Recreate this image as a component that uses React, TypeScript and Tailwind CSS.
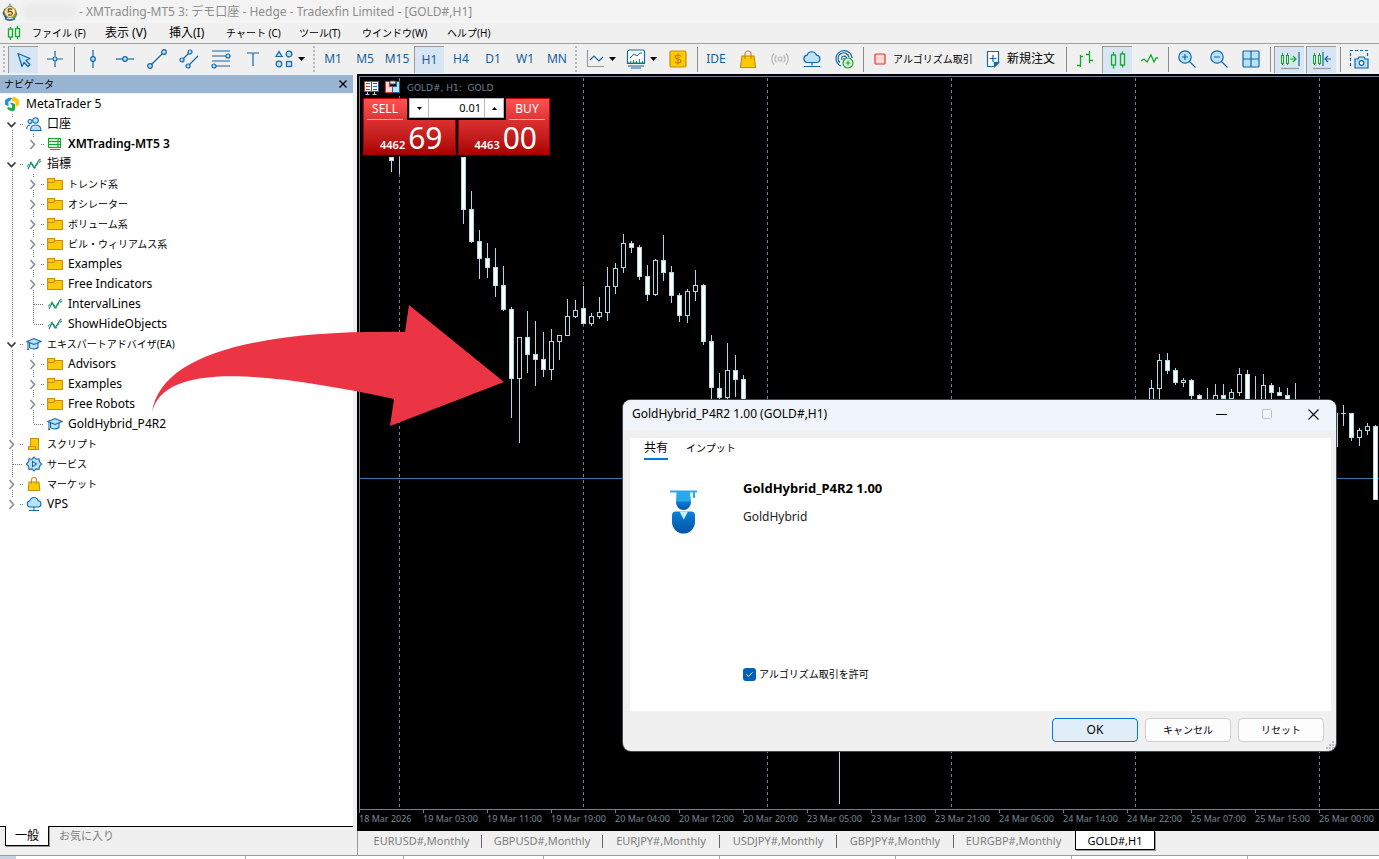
import React from "react";

type Candle = [x: number, high: number, top: number, bottom: number, low: number, filled: boolean];

const BLUE = "#1567a5";
const PALE = "#b9e2fb";

const candles: Candle[] = [
  [391, 157, 157, 161, 172, true],
  [463, 157, 157, 210, 224, true],
  [471, 191, 209, 242, 243, true],
  [479, 230, 241, 259, 279, true],
  [487, 243, 258, 268, 278, true],
  [495, 248, 267, 286, 297, true],
  [503, 266, 285, 310, 311, true],
  [511, 307, 309, 379, 418, true],
  [519, 337, 337, 379, 443, false],
  [527, 311, 337, 355, 373, true],
  [535, 321, 354, 360, 386, true],
  [543, 332, 359, 370, 377, true],
  [551, 329, 341, 370, 380, false],
  [559, 335, 335, 342, 360, false],
  [567, 299, 316, 336, 336, false],
  [575, 300, 310, 317, 318, false],
  [583, 286, 308, 324, 324, true],
  [591, 313, 316, 324, 326, false],
  [599, 297, 312, 317, 319, false],
  [607, 267, 286, 313, 321, false],
  [615, 263, 268, 287, 294, false],
  [623, 234, 243, 268, 273, false],
  [631, 241, 243, 248, 253, true],
  [639, 245, 247, 277, 280, true],
  [647, 265, 276, 295, 301, true],
  [655, 259, 260, 295, 296, false],
  [663, 235, 260, 273, 281, true],
  [671, 266, 272, 296, 303, true],
  [679, 293, 295, 316, 322, true],
  [687, 289, 291, 316, 323, false],
  [695, 270, 285, 292, 301, false],
  [703, 284, 285, 342, 345, true],
  [711, 335, 341, 388, 402, true],
  [719, 373, 388, 398, 402, true],
  [727, 343, 370, 398, 399, false],
  [735, 355, 370, 380, 397, true],
  [743, 375, 379, 404, 404, true],
  [1151, 380, 388, 404, 404, false],
  [1159, 354, 360, 389, 399, false],
  [1167, 353, 360, 371, 374, true],
  [1175, 368, 370, 383, 385, true],
  [1183, 378, 380, 383, 387, false],
  [1191, 379, 380, 396, 404, true],
  [1199, 394, 395, 404, 404, true],
  [1215, 384, 395, 404, 404, false],
  [1223, 384, 395, 399, 404, true],
  [1231, 389, 392, 399, 404, false],
  [1239, 368, 374, 393, 396, false],
  [1247, 370, 374, 404, 404, true],
  [1263, 374, 385, 404, 404, false],
  [1271, 383, 385, 393, 404, true],
  [1279, 387, 392, 396, 396, true],
  [1287, 388, 395, 404, 404, true],
  [1335, 413, 413, 447, 447, false],
  [1343, 405, 413, 414, 426, true],
  [1351, 413, 413, 438, 441, true],
  [1359, 428, 430, 438, 446, false],
  [1367, 423, 426, 431, 435, false],
  [1375, 425, 426, 500, 500, true],
];

const wicks: [number, number, number][] = [
  [399, 157, 174],
  [839, 740, 804],
  [1143, 399, 404],
  [1207, 388, 404],
  [1255, 376, 404],
  [1295, 383, 404],
];

const timeLabels = [
  "18 Mar 2026", "19 Mar 03:00", "19 Mar 11:00", "19 Mar 19:00", "20 Mar 04:00", "20 Mar 12:00",
  "20 Mar 20:00", "23 Mar 05:00", "23 Mar 13:00", "23 Mar 21:00", "24 Mar 06:00", "24 Mar 14:00",
  "24 Mar 22:00", "25 Mar 07:00", "25 Mar 15:00", "26 Mar 00:00",
];

/* ---------- icons ---------- */

function Ico({ children, w = 20, h = 20 }: { children: React.ReactNode; w?: number; h?: number }) {
  return (
    <svg width={w} height={h} viewBox={`0 0 ${w} ${h}`} fill="none" stroke={BLUE} strokeWidth={w < 20 ? 1.05 : 1.2} className="block shrink-0" aria-hidden="true">
      {children}
    </svg>
  );
}

const Dot = ({ x, y, r = 2 }: { x: number; y: number; r?: number }) => <circle cx={x} cy={y} r={r} fill={PALE} />;

const Caret = () => (
  <svg width="7" height="4" viewBox="0 0 7 4" className="block shrink-0" aria-hidden="true"><path d="M0 0h7L3.500 4z" fill="#000" /></svg>
);

const IconPointer = () => <Ico><path d="M4 3.500 L16 8.500 L12 10.500 L16 14.500 L14 16.500 L10 12.500 L8 16.500 Z" fill={PALE} strokeLinejoin="round" /></Ico>;
const IconCross = () => <Ico><path d="M10 2v5.500M10 12.500V18M2 10h5.500M12.500 10H18" /><Dot x={10} y={10} /></Ico>;
const IconVLine = () => <Ico><path d="M10 1v18" /><Dot x={10} y={10} r={2.3} /></Ico>;
const IconHLine = () => <Ico><path d="M1 10h18" /><Dot x={10} y={10} r={2.3} /></Ico>;
const IconTrend = () => <Ico><path d="M3 17 17 3" /><Dot x={3} y={17} r={2.3} /><Dot x={17} y={3} r={2.3} /></Ico>;
const IconChannel = () => <Ico><path d="M3 11 11 3M9 17 19 7" /><Dot x={3} y={11} /><Dot x={11} y={3} /><Dot x={9} y={17} /></Ico>;
const IconFib = () => <Ico><path d="M1 2h18M1 7h14M1 12h18M5 17h14" /><Dot x={17} y={7} /><Dot x={3} y={17} /></Ico>;
const IconText = () => <Ico><path d="M4 4h12M10 4v13" /></Ico>;
const IconShapes = () => (
  <Ico><path d="M5 2.500 8 7.500H2z" fill={PALE} /><circle cx="15" cy="5" r="2.800" fill={PALE} /><circle cx="5" cy="15" r="2.800" fill={PALE} /><rect x="12.500" y="12.500" width="5" height="5" fill={PALE} /></Ico>
);
const IconLineChart = () => <Ico><path d="M1.500 1v16.500H18" stroke="#999" /><path d="M4 11l4-4 5 5 4-4" /></Ico>;
const IconIndicators = () => (
  <Ico><path d="M1.500 14V3a2 2 0 0 1 2-2h13a2 2 0 0 1 2 2v11z" fill="#fff" /><path d="M4 9l4-4 3 2 3-3 2 0" strokeWidth="1" /><path d="M4.500 14v-2M7.500 14v-3M10.500 14v-2M13.500 14v-4M16.500 14v-2" stroke="#12a92c" strokeWidth="1" /><path d="M1 14.500h18M2 17h16M5 19h10" /></Ico>
);
const IconDollar = () => (
  <Ico><rect x="2" y="2" width="16" height="16" rx="1.500" fill="#fcca02" stroke="#c98c0b" /><path d="M13 7.500C12.500 6.500 11.500 6 10 6c-1.700 0-2.800.8-2.800 2s1 1.700 2.800 2 2.900.9 2.900 2.100S11.700 14 10 14s-2.700-.6-3-1.700M10 4.500v11" stroke="#c07f00" /></Ico>
);
const IconBag = () => <Ico><path d="M4 7h12l1.500 11.500h-15z" fill="#fcca02" stroke="#c98c0b" /><path d="M7 10V5a3 3 0 0 1 6 0v5" stroke="#c98c0b" /></Ico>;
const IconSignal = () => (
  <Ico><g stroke="#b4b4b4"><circle cx="10" cy="10" r="2" /><path d="M6.500 6.500a5 5 0 0 0 0 7M13.500 6.500a5 5 0 0 1 0 7M4 4.500a8 8 0 0 0 0 11M16 4.500a8 8 0 0 1 0 11" /></g></Ico>
);
const IconCloud = () => <Ico><path d="M5 13.500a3.700 3.700 0 0 1 0-7.300 5 5 0 0 1 9.500 0 3.700 3.700 0 0 1 .5 7.300z" fill={PALE} /><path d="M10 13.500v3M2 17.500h16M8 17.500h4" /></Ico>;
const IconCommunity = () => (
  <Ico><path d="M7 17A8 8 0 1 1 18 9M6 13.500a5.500 5.500 0 1 1 9-5M8 11a2.500 2.500 0 1 1 4.500-2M10 9v3" /><circle cx="14" cy="14" r="5" fill="#e6f9e8" stroke="#12a92c" /><path d="M14 11.500v5M11.500 14h5" stroke="#12a92c" /></Ico>
);
const IconStop = () => <Ico><rect x="5" y="5" width="10" height="10" rx="1" fill="#ffd9d6" stroke="#e0342c" /></Ico>;
const IconNewOrder = () => <Ico><path d="M4.500 2.500h11v11l-4 4h-7zM15.500 13.500h-4v4" fill="#fff" strokeLinejoin="round" /><path d="m15.500 13.500-4 4v-4z" fill={BLUE} /><path d="M10 6v7M6.500 9.500h7" /></Ico>;
const IconBars = () => <Ico><g stroke="#12a92c" strokeWidth="1.300"><path d="M5.500 6v12M2 16.500h3.500M5.500 7.500H8M14.500 2v12M11 5.500h3.500M14.500 11.500H18" /></g></Ico>;
const IconCandles = () => <Ico><g stroke="#12a92c" strokeWidth="1.300"><path d="M5.500 2V5m0 10v3.500M14.500 1.500V4m0 11v2.500" /><rect x="3.500" y="5" width="4" height="10" /><rect x="12.500" y="4" width="4" height="11" /></g></Ico>;
const IconMenuCandles = () => <Ico w={14} h={16}><g stroke="#12a92c" strokeWidth="1.300"><path d="M3.500 2v2m0 8v3M10.500 1v2.500m0 8v2.500" /><rect x="1.500" y="4" width="4" height="8" /><rect x="8.500" y="3.500" width="4" height="8" /></g></Ico>;
const IconZigzag = () => <Ico><path d="m2 12 3-2 3 3 4-7 3 7 2-4 2 0" stroke="#12a92c" strokeWidth="1.300" /></Ico>;
const IconZoom = ({ plus }: { plus?: boolean }) => <Ico><circle cx="8" cy="8" r="6.200" fill={PALE} /><path d={plus ? "M12.500 12.500 18.500 18.500M5 8h6M8 5v6" : "M12.500 12.500 18.500 18.500M5 8h6"} /></Ico>;
const IconGrid = () => <Ico><rect x="2" y="2" width="16" height="16" rx="1" fill={PALE} /><path d="M10 2v16M2 10h16" /></Ico>;
const IconScroll = ({ shift }: { shift?: boolean }) => (
  <Ico>
    <g stroke="#12a92c" strokeWidth="1"><path d="M2.500 3v12M7.500 3v12" /><rect x="1.500" y="5.500" width="2" height="8" fill="#dff3e0" /><rect x="6.500" y="5.500" width="2" height="8" fill="#dff3e0" /></g>
    {shift ? <path d="M11 2v14M19 9h-6m3-3-3 3 3 3" /> : <><path d="M10 9h6m-3-3 3 3-3 3" stroke="#12a92c" /><path d="M19 2v14" /></>}
    <path d="M1 18.500h18" stroke="#999" />
  </Ico>
);
const IconCamera = () => <Ico><path d="M1.500 17V1.500h17V7" strokeDasharray="3 2" /><path d="M6 10h3l1-2h5l1 2h3v9H6z" fill={PALE} /><circle cx="12.500" cy="14" r="2.300" fill="#fff" /></Ico>;

const IconUsers = () => (
  <Ico w={16} h={16}><circle cx="9.500" cy="4.500" r="2.800" fill={PALE} /><path d="M4.500 14.500c0-4 2-5.500 5-5.500s5.500 1.500 5.500 5.500z" fill={PALE} /><circle cx="4" cy="5.500" r="2" fill={PALE} /><path d="M.7 13c0-3 1.300-4 3.800-4" /></Ico>
);
const IconServer = () => <Ico w={16} h={16}><g stroke="#12a92c"><rect x="1.500" y="2.500" width="12" height="9" fill="#d6f6d8" /><path d="M2 5.500h12M2 8.500h12M3 13.500h10M11 3v8" /></g></Ico>;
const IconIndicator = () => <Ico w={16} h={16}><path d="m2 13 3-6 3 5 5-8 1.500-1" /><path d="M1 10.500 5 6l4 6 3-5 3-2" stroke="#12a92c" strokeDasharray="3 1" /></Ico>;
const IconFolder = () => <Ico w={16} h={16}><path d="M.6 2.500h7v2h7.800v9H.6z" fill="#fcca02" stroke="#c98c0b" /><path d="M1 6.500h5.500l1.500-2" stroke="#c98c0b" /></Ico>;
const IconCap = () => <Ico w={16} h={16}><path d="M3.500 6.500v5c2 2 6 2 8.500 0v-5" fill={PALE} /><path d="M1 5.500 8 2.500l7 3-7 3z" fill={PALE} /><path d="M2 6v7.500M1 13.500l2 0" /></Ico>;
const IconScript = () => <Ico w={16} h={16}><path d="M4.500 2.500h8v11h-10v-3h2z" fill="#fcca02" stroke="#c98c0b" /><path d="M2.500 10.500h7v3" stroke="#c98c0b" /></Ico>;
const IconService = () => <Ico w={16} h={16}><path d="m8 1 2 2.200 3-.4.5 2.900L15.500 8l-2 2.300-.5 3-3-.4L8 15l-2-2.100-3 .4-.5-3L.5 8l2-2.300.5-2.900 3 .4z" fill={PALE} /><path d="M6.500 5.500v5L10.500 8z" fill="#fff" /></Ico>;
const IconMarket = () => <Ico w={16} h={16}><path d="M3 6h10l.8 8.500H2.200z" fill="#fcca02" stroke="#c98c0b" /><path d="M5.500 8V4a2.500 2.500 0 0 1 5 0v4" stroke="#c98c0b" /></Ico>;
const IconVps = () => <Ico w={16} h={16}><path d="M4 11a3.200 3.200 0 0 1-.2-6.300 4.300 4.300 0 0 1 8.300 0A3.200 3.200 0 0 1 12.500 11z" fill={PALE} /><path d="M8 11v3M3 14.500h10" /></Ico>;
const IconRoot = () => (
  <svg width="16" height="16" viewBox="0 0 16 16" className="block shrink-0" aria-hidden="true">
    <path d="M1 4 5 1.500 8 2 6.500 4.500 4.500 5.500v5L1 8.500z" fill="#1b93e8" />
    <path d="M8.500.8 11 1l4 3v5l-3.500 2V6.500L7.500 4z" fill="#fcc803" />
    <path d="M3.500 11v2.500L8.500 15.500l2.500-1.500V8L7.500 6.500l-1.500 1L8 9v3z" fill="#1eaa4d" />
  </svg>
);

/* ---------- title and menu ---------- */

function TitleBar() {
  return (
    <header className="flex h-[23px] shrink-0 items-center bg-[#f3f3f3] pl-[2px]">
      <svg width="16" height="18" viewBox="0 0 16 18" className="block shrink-0" aria-hidden="true">
        <path d="M8 0 11 5H5z" fill="#6db3d8" /><path d="M3 5 .5 10l3 6 4-3z" fill="#1d5e92" /><path d="m13 5 2.500 6-3 5.500L8 13z" fill="#56a044" />
        <circle cx="8" cy="9" r="5.500" fill="#f7e3ac" stroke="#b48a2c" />
        <path d="M10.300 6H6.600L6.300 8.800c2-.8 4-.2 4 1.500 0 2-2.500 2.300-4.300 1.300" fill="none" stroke="#7c5b17" strokeWidth="1.400" />
        <path d="M3 15.500q5 3 10 0" stroke="#33749c" fill="none" strokeWidth="2" />
      </svg>
      <span className="ml-[4px] h-[17px] w-[56px] shrink-0 rounded-full bg-[#ebebeb] blur-[2px]" />
      <h1 className="ml-px truncate text-[12px] text-[#8d8d8d]">- XMTrading-MT5 3: デモ口座 - Hedge - Tradexfin Limited - [GOLD#,H1]</h1>
    </header>
  );
}

const menus: [string, string][] = [
  ["ファイル (F)", "w-[73px] text-[10px]"], ["表示 (V)", "w-[64px] text-[12px]"], ["挿入(I)", "w-[57px] text-[12px]"], ["チャート (C)", "w-[73px] text-[10px]"],
  ["ツール(T)", "w-[63px] text-[10px]"], ["ウインドウ(W)", "w-[85px] text-[10px]"], ["ヘルプ(H)", "w-[60px] text-[10px]"],
];

function MenuBar() {
  return (
    <nav className="flex h-[21px] shrink-0 items-center border-b border-[#a0a0a0] bg-[#f0f0f0] pl-[7px]">
      <span className="w-[25px] shrink-0"><IconMenuCandles /></span>
      {menus.map(([label, style]) => (
        <button key={label} type="button" className={`${style} shrink-0 text-left leading-[18px] whitespace-nowrap text-black`}>{label}</button>
      ))}
    </nav>
  );
}

/* ---------- toolbar ---------- */

function Tool({ label, active, children }: { label: string; active?: boolean; children: React.ReactNode }) {
  return (
    <span className="flex w-8 shrink-0 justify-center">
      <button
        type="button"
        aria-label={label}
        className={`flex h-[27px] w-[30px] items-center justify-center text-[12px] text-[#15609b] ${active ? "border-t border-l border-[#9b9b9b] bg-[#d8e6f3]" : ""}`}
      >
        {children}
      </button>
    </span>
  );
}

const Sep = () => <span className="flex w-[6px] shrink-0 justify-center"><span className="h-[25px] w-px bg-[#8c8c8c]" /></span>;
const Grip = () => <span className="mx-[2px] h-[26px] w-0 shrink-0 border-l-2 border-dotted border-[#b9b9b9]" />;

const periods = ["M1", "M5", "M15", "H1", "H4", "D1", "W1", "MN"];

function Toolbar() {
  return (
    <div role="toolbar" className="flex h-[30px] shrink-0 items-center overflow-hidden bg-[#f0f0f0] pl-px">
      <Grip />
      <Tool label="カーソル" active><IconPointer /></Tool>
      <Tool label="十字カーソル"><IconCross /></Tool>
      <Sep />
      <Tool label="垂直線"><IconVLine /></Tool>
      <Tool label="水平線"><IconHLine /></Tool>
      <Tool label="トレンドライン"><IconTrend /></Tool>
      <Tool label="チャネル"><IconChannel /></Tool>
      <Tool label="フィボナッチ"><IconFib /></Tool>
      <Tool label="テキスト"><IconText /></Tool>
      <button type="button" aria-label="図形" className="flex w-[42px] shrink-0 items-center gap-[4px] pl-[5px]"><IconShapes /><Caret /></button>
      <Grip />
      {periods.map((p) => <Tool key={p} label={p} active={p === "H1"}>{p}</Tool>)}
      <Grip />
      <button type="button" aria-label="チャート種別" className="flex w-[41px] shrink-0 items-center gap-[3px] pl-[7px]"><IconLineChart /><Caret /></button>
      <button type="button" aria-label="指標" className="flex w-[42px] shrink-0 items-center gap-[4px] pl-[6px]"><IconIndicators /><Caret /></button>
      <Tool label="銘柄"><IconDollar /></Tool>
      <Sep />
      <Tool label="IDE">IDE</Tool>
      <Tool label="マーケット"><IconBag /></Tool>
      <Tool label="シグナル"><IconSignal /></Tool>
      <Tool label="VPS"><IconCloud /></Tool>
      <Tool label="コミュニティ"><IconCommunity /></Tool>
      <Sep />
      <button type="button" className="flex w-[112px] shrink-0 items-center gap-[3px] pl-[4px] text-[10px] whitespace-nowrap"><IconStop />アルゴリズム取引</button>
      <button type="button" className="flex w-[85px] shrink-0 items-center gap-[4px] pl-[5px] text-[12px] whitespace-nowrap"><IconNewOrder />新規注文</button>
      <Sep />
      <Tool label="バーチャート"><IconBars /></Tool>
      <Tool label="ローソク足" active><IconCandles /></Tool>
      <Tool label="ラインチャート"><IconZigzag /></Tool>
      <Sep />
      <Tool label="拡大"><IconZoom plus /></Tool>
      <Tool label="縮小"><IconZoom /></Tool>
      <Tool label="整列"><IconGrid /></Tool>
      <Sep />
      <Tool label="自動スクロール" active><IconScroll /></Tool>
      <Tool label="チャートシフト" active><IconScroll shift /></Tool>
      <Sep />
      <Tool label="スクリーンショット"><IconCamera /></Tool>
    </div>
  );
}

/* ---------- navigator ---------- */

type Row = { label: string; icon: () => React.ReactNode; level: 0 | 1; state: "open" | "closed" | "leaf"; last?: boolean; tail?: boolean; bold?: boolean; kana?: boolean };

const rows: Row[] = [
  { label: "口座", icon: IconUsers, level: 0, state: "open" },
  { label: "XMTrading-MT5 3", icon: IconServer, level: 1, state: "closed", last: true, bold: true },
  { label: "指標", icon: IconIndicator, level: 0, state: "open" },
  { label: "トレンド系", icon: IconFolder, level: 1, state: "closed", kana: true },
  { label: "オシレーター", icon: IconFolder, level: 1, state: "closed", kana: true },
  { label: "ボリューム系", icon: IconFolder, level: 1, state: "closed", kana: true },
  { label: "ビル・ウィリアムス系", icon: IconFolder, level: 1, state: "closed", kana: true },
  { label: "Examples", icon: IconFolder, level: 1, state: "closed" },
  { label: "Free Indicators", icon: IconFolder, level: 1, state: "closed" },
  { label: "IntervalLines", icon: IconIndicator, level: 1, state: "leaf" },
  { label: "ShowHideObjects", icon: IconIndicator, level: 1, state: "leaf", last: true },
  { label: "エキスパートアドバイザ(EA)", icon: IconCap, level: 0, state: "open", kana: true },
  { label: "Advisors", icon: IconFolder, level: 1, state: "closed" },
  { label: "Examples", icon: IconFolder, level: 1, state: "closed" },
  { label: "Free Robots", icon: IconFolder, level: 1, state: "closed" },
  { label: "GoldHybrid_P4R2", icon: IconCap, level: 1, state: "leaf", last: true },
  { label: "スクリプト", icon: IconScript, level: 0, state: "closed", kana: true },
  { label: "サービス", icon: IconService, level: 0, state: "leaf", kana: true },
  { label: "マーケット", icon: IconMarket, level: 0, state: "closed", kana: true },
  { label: "VPS", icon: IconVps, level: 0, state: "closed", tail: true },
];

function Gutter({ level, state, last, tail }: Row) {
  const x = level === 0 ? 12.5 : 33.5;
  const w = level === 0 ? 23 : 44;
  const ends = last || tail;
  return (
    <svg width={w} height="20" viewBox={`0 0 ${w} 20`} fill="none" className="block shrink-0" aria-hidden="true">
      <g stroke="#777" strokeDasharray="1 1" shapeRendering="crispEdges">
        {level === 1 && <path d="M12.500 0V20" />}
        <path d={state === "leaf" ? `M${x} 0V${ends ? 10 : 20}` : ends ? `M${x} 0V4` : `M${x} 0V4M${x} 16V20`} />
        <path d={state === "leaf" ? `M${x + 0.5} 10.500H${w}` : `M${x + 7.5} 10.500H${w}`} />
      </g>
      {state === "open" && <path d={`M${x - 5} 8.500l4 4 4-4`} stroke="#333" strokeWidth="1.600" />}
      {state === "closed" && <path d={`M${x - 3} 6l4 4.500-4 4.500`} stroke="#8d8d8d" strokeWidth="1.600" />}
    </svg>
  );
}

function Navigator() {
  return (
    <aside className="flex w-[353px] shrink-0 flex-col bg-white">
      <div className="flex h-[18px] shrink-0 items-center justify-between bg-[#99b4d1] pr-[5px] pl-[4px]">
        <h2 className="text-[10px] leading-[18px] text-black">ナビゲータ</h2>
        <button type="button" aria-label="閉じる" className="p-[1px]">
          <svg width="8" height="8" viewBox="0 0 8 8" className="block"><path d="m.5.5 7 7m0-7-7 7" stroke="#000" strokeWidth="1.300" /></svg>
        </button>
      </div>
      <ul className="flex-1 border-t border-[#f0f0f0] text-[12px] leading-[20px] text-black">
        <li className="flex h-5 items-center gap-[6px] pl-[4px]"><IconRoot />MetaTrader 5</li>
        {rows.map((row, i) => (
          <li key={i} className="flex h-5 items-center">
            <Gutter {...row} />
            <span className="ml-[3px]"><row.icon /></span>
            <span className={`ml-[5px] whitespace-nowrap ${row.bold ? "font-semibold" : ""} ${row.kana ? "text-[10px]" : ""}`}>{row.label}</span>
          </li>
        ))}
      </ul>
      <div role="tablist" className="flex h-[29px] shrink-0 items-start bg-[#f0f0f0] text-[11px]">
        <span className="w-[5px] border-t border-black" />
        <button type="button" role="tab" aria-selected="true" className="h-[20px] w-[44px] border-r border-b border-l border-black bg-white text-[12px] shadow-[1px_1px_0_#999]">一般</button>
        <button type="button" role="tab" aria-selected="false" className="h-[20px] flex-1 border-t border-black pl-[10px] text-left text-[#7b7b7b]">お気に入り</button>
      </div>
    </aside>
  );
}

/* ---------- chart ---------- */

function Candles() {
  return (
    <svg width="100%" height="100%" className="absolute inset-0" shapeRendering="crispEdges" aria-hidden="true">
      <g transform="translate(-357 -74)">
        {[399, 583, 767, 951, 1135, 1319].map((x) => (
          <path key={x} d={`M${x + 0.5} 78V809`} stroke="#708090" strokeDasharray="3 3" />
        ))}
        <path d="M359 478.500H2400" stroke="#3b78ab" />
        {wicks.map(([x, a, b]) => <rect key={x} x={x} y={a} width="1" height={b - a} fill="#add8e6" />)}
        {candles.map(([x, high, top, bottom, low, filled]) => (
          <g key={x}>
            <rect x={x} y={high} width="1" height={low - high} fill="#add8e6" />
            <rect x={x - 2} y={top} width="5" height={bottom - top} fill="#add8e6" />
            {bottom - top > 2 && <rect x={x - 1} y={top + 1} width="3" height={bottom - top - 2} fill={filled ? "#fff" : "#000"} />}
          </g>
        ))}
      </g>
    </svg>
  );
}

function PriceButton({ label, small, big }: { label: string; small: string; big: string }) {
  return (
    <button type="button" aria-label={label} className="flex h-[35px] flex-1 items-end justify-end gap-[3px] border-x border-b border-[#a30000] bg-linear-to-b from-[#dc3030] to-[#a90000] pr-[12px] text-white">
      <span className="pb-[2px] text-[11px] leading-[14px] font-semibold">{small}</span>
      <span className="text-[30px] leading-[32px]">{big}</span>
    </button>
  );
}

function TradePanel() {
  return (
    <div className="absolute top-[24px] left-[6px] flex w-[187px] flex-col bg-black">
      <div className="flex h-[22px]">
        <button type="button" className="w-[44px] border-t border-l border-[#c00000] bg-linear-to-b from-[#ff5252] to-[#df3333] pr-[4px] pl-[3px] text-[12px] text-white">
          <span className="block border-b border-[#ffaaaa] leading-[20px]">SELL</span>
        </button>
        <div className="mx-[2px] flex h-[20px] flex-1 items-stretch border border-[#b8b8c0] bg-white">
          <button type="button" aria-label="減らす" className="flex w-[19px] items-center justify-center border-r border-[#b8b8c0]">
            <svg width="5" height="3" viewBox="0 0 5 3"><path d="M0 0h5L2.500 3z" /></svg>
          </button>
          <input aria-label="ロット" defaultValue="0.01" className="w-0 flex-1 pr-[3px] text-right text-[11px] text-black outline-none" />
          <button type="button" aria-label="増やす" className="flex w-[19px] items-center justify-center border-l border-[#b8b8c0]">
            <svg width="5" height="3" viewBox="0 0 5 3"><path d="M0 3h5L2.500 0z" /></svg>
          </button>
        </div>
        <button type="button" className="w-[44px] border-t border-r border-[#c00000] bg-linear-to-b from-[#ff5252] to-[#df3333] pr-[4px] pl-[3px] text-[12px] text-white">
          <span className="block border-b border-[#ffaaaa] leading-[20px]">BUY</span>
        </button>
      </div>
      <div className="flex gap-[2px]">
        <PriceButton label="SELL 4462 69" small="4462" big="69" />
        <PriceButton label="BUY 4463 00" small="4463" big="00" />
      </div>
    </div>
  );
}

const chartTabs: [string, string][] = [
  ["EURUSD#,Monthly", "w-[120px]"], ["GBPUSD#,Monthly", "w-[121px]"], ["EURJPY#,Monthly", "w-[117px]"],
  ["USDJPY#,Monthly", "w-[117px]"], ["GBPJPY#,Monthly", "w-[117px]"], ["EURGBP#,Monthly", "w-[120px]"],
];

function Chart() {
  return (
    <main className="ml-[4px] flex min-w-0 flex-1 flex-col overflow-hidden">
      <div className="relative flex-1 bg-black">
        <Candles />
        <div className="absolute top-[2px] right-0 bottom-0 left-[2px] border-t border-b border-l border-[#708090]" />
        <div className="absolute top-[6px] left-[7px] flex items-center font-[DejaVu_Sans,sans-serif] text-[9px] leading-[14px] text-[#708090]">
          <svg width="15" height="15" viewBox="0 0 15 15" aria-hidden="true"><path d="M.5 1.500h7v10h-7z" fill="#fff" stroke="#e0342c" /><path d="M7.500 1.500h7v10h-7z" fill="#fff" stroke={BLUE} /><path d="M2 3.500h4M2 6.500h4M2 9.500h4" stroke="#e0342c" /><path d="M9 3.500h4M9 6.500h4M9 9.500h4" stroke={BLUE} /><path d="M3.500 12v3M10.500 12v3M1.500 14.500h4M8.500 14.500h4" stroke="#add8e6" /></svg>
          <svg width="15" height="15" viewBox="0 0 15 15" className="ml-[6px]" aria-hidden="true"><path d="M.5 1.500h4v5h3v6h-7z" fill="#ffd9d6" stroke="#e0342c" /><path d="M14.500 1.500h-3v5h-4v6h7z" fill={PALE} stroke="#1567a5" /><path d="M5 1h5.500v3H5z" fill="#eee" stroke="#555" /></svg>
          <span className="ml-[7px] whitespace-pre">GOLD#, H1:  GOLD</span>
        </div>
        <TradePanel />
      </div>
      <div className="flex h-[21px] shrink-0 overflow-hidden bg-black pl-[2px] text-[9px] leading-[12px] text-[#778899]">
        {timeLabels.map((t) => (
          <span key={t} className="flex w-16 shrink-0 flex-col whitespace-nowrap">
            <span className="h-[3px] w-px shrink-0 bg-[#708090]" />
            {t}
          </span>
        ))}
      </div>
      <div role="tablist" className="flex h-[24px] shrink-0 items-start overflow-hidden border-l border-[#999] bg-[#f0f0f0] pl-[4px] text-[11px] text-[#7d7d7d]">
        {chartTabs.map(([t, w], i) => (
          <span key={t} className={`${w} flex h-[20px] shrink-0 items-center justify-end whitespace-nowrap`}>
            <button type="button" role="tab" aria-selected="false" className="flex-1 text-center">{t}</button>
            <span className={`h-[13px] w-px ${i < 5 ? "bg-[#666]" : ""}`} />
          </span>
        ))}
        <button type="button" role="tab" aria-selected="true" className="ml-px h-[19px] w-[80px] shrink-0 border-x border-b border-black bg-white leading-[17px] text-black shadow-[1px_1px_0_#999]">GOLD#,H1</button>
      </div>
    </main>
  );
}

/* ---------- dialog ---------- */

function ExpertDialog() {
  return (
    <section role="dialog" aria-label="GoldHybrid_P4R2 1.00 (GOLD#,H1)" className="absolute top-[400px] left-[623px] flex h-[351px] w-[713px] flex-col rounded-[8px] bg-[#f0f0f0] shadow-[0_0_0_1px_#44484d]">
      <div className="flex h-[30px] shrink-0 items-center rounded-t-[8px] bg-[#eff3fa] pr-[17px] pb-[2px] pl-[9px]">
        <h2 className="flex-1 text-[12px] text-black">GoldHybrid_P4R2 1.00 (GOLD#,H1)</h2>
        <div className="flex gap-[35px]">
          <button type="button" aria-label="最小化"><svg width="11" height="11" viewBox="0 0 11 11" className="block"><path d="M0 5.500h11" stroke="#000" /></svg></button>
          <button type="button" aria-label="最大化" disabled><svg width="11" height="11" viewBox="0 0 11 11" className="block"><rect x=".5" y=".5" width="9" height="9" rx="1" fill="none" stroke="#c2c3c8" /></svg></button>
          <button type="button" aria-label="閉じる"><svg width="11" height="11" viewBox="0 0 11 11" className="block"><path d="m.5.5 10 10m0-10-10 10" stroke="#000" strokeWidth="1.100" /></svg></button>
        </div>
      </div>
      <div className="mx-[5px] mt-[8px] ml-[7px] flex flex-1 flex-col bg-white">
        <div role="tablist" className="flex gap-[18px] pl-[14px] text-[12px] leading-[20px] text-black">
          <button type="button" role="tab" aria-selected="true" className="h-[22px] border-b-2 border-[#0078d7]">共有</button>
          <button type="button" role="tab" aria-selected="false" className="h-[22px] pb-[2px] text-[10px]">インプット</button>
        </div>
        <div className="flex flex-1 pt-[18px] pb-[29px]">
          <div className="w-[113px] shrink-0 pt-[11px] pl-[40px]">
            <svg width="28" height="46" viewBox="0 0 28 46" aria-hidden="true">
              <defs>
                <linearGradient id="body" x1="0" y1="0" x2="0" y2="1"><stop offset="0" stopColor="#0d80da" /><stop offset="1" stopColor="#0553a0" /></linearGradient>
              </defs>
              <path d="M6 12h15v1.500a7.500 7.500 0 0 1-15 0z" fill="url(#body)" />
              <path d="M6.500 3h13.500l1 9.500h-15z" fill="#2aa9ea" />
              <path d="M0 1.500h27v2H0zM23 3h2v6h-2z" fill="#2aa9ea" />
              <path d="M6 22.500h15q4 0 4 4v6.500a11.500 11.500 0 0 1-23 0v-6.500q0-4 4-4z" fill="url(#body)" />
              <path d="M9.500 22.500h8.500l-4.200 8z" fill="#c5f0fd" />
            </svg>
          </div>
          <div className="flex flex-1 flex-col items-start">
            <h3 className="text-[13px] leading-[20px] font-bold text-black">GoldHybrid_P4R2 1.00</h3>
            <p className="mt-[9px] text-[12px] leading-[20px] text-[#222]">GoldHybrid</p>
            <label className="mt-auto flex items-center gap-[3px] text-[10px] leading-[16px] text-black">
              <span className="grid size-[13px] place-items-center">
                <input type="checkbox" defaultChecked className="col-start-1 row-start-1 size-[13px] appearance-none rounded-[3px] bg-[#005fb8]" />
                <svg width="9" height="9" viewBox="0 0 9 9" className="pointer-events-none z-10 col-start-1 row-start-1" aria-hidden="true"><path d="m1.500 4.500 2 2 4-4" fill="none" stroke="#fff" /></svg>
              </span>
              アルゴリズム取引を許可
            </label>
          </div>
        </div>
      </div>
      <div className="flex h-[40px] shrink-0 items-start justify-end gap-[7px] pt-[7px] pr-[12px] text-[10px] text-black">
        <button type="button" className="h-[24px] w-[86px] rounded-[4px] border border-[#0078d4] bg-[#e0eef9] text-[12px]">OK</button>
        <button type="button" className="h-[24px] w-[86px] rounded-[4px] border border-[#d0d0d0] bg-[#fdfdfd]">キャンセル</button>
        <button type="button" className="h-[24px] w-[86px] rounded-[4px] border border-[#d0d0d0] bg-[#fdfdfd]">リセット</button>
      </div>
      <svg width="8" height="8" viewBox="0 0 8 8" className="absolute right-[2px] bottom-[2px]" fill="#bdbdbd" aria-hidden="true"><path d="M6 0h2v2H6zM3 3h2v2H3zM6 3h2v2H6zM0 6h2v2H0zM3 6h2v2H3zM6 6h2v2H6z" /></svg>
    </section>
  );
}

function Arrow() {
  return (
    <svg width="360" height="130" viewBox="148 300 360 130" className="pointer-events-none absolute top-[300px] left-[148px]" aria-hidden="true">
      <path d="M152 413C160 350 270 330 405 332L409 305 504 382 390 426 394 399C262 371 163 362 152 413Z" fill="#eb3544" />
    </svg>
  );
}

export default function App() {
  return (
    <div className="relative flex h-screen flex-col overflow-hidden bg-[#f0f0f0] font-[Noto_Sans,Noto_Sans_CJK_JP,sans-serif]">
      <TitleBar />
      <MenuBar />
      <Toolbar />
      <div className="flex min-h-0 flex-1">
        <div className="flex pt-px"><Navigator /></div>
        <Chart />
      </div>
      <footer className="flex h-[4px] shrink-0 border-t border-[#9a9a9a] bg-white">
        <span className="w-[16px] bg-[#c5d3e3]" />
        <span className="w-[230px] border-r border-[#aaa]" />
        <span className="w-[158px] border-r border-[#aaa]" />
        <span className="w-[140px] border-r border-[#aaa]" />
        <span className="w-[176px] border-r border-[#aaa]" />
        <span className="w-[176px] border-r border-[#aaa]" />
        <span className="w-[176px] border-r border-[#aaa]" />
        <span className="w-[176px] border-r border-[#aaa]" />
      </footer>
      <Arrow />
      <ExpertDialog />
    </div>
  );
}
